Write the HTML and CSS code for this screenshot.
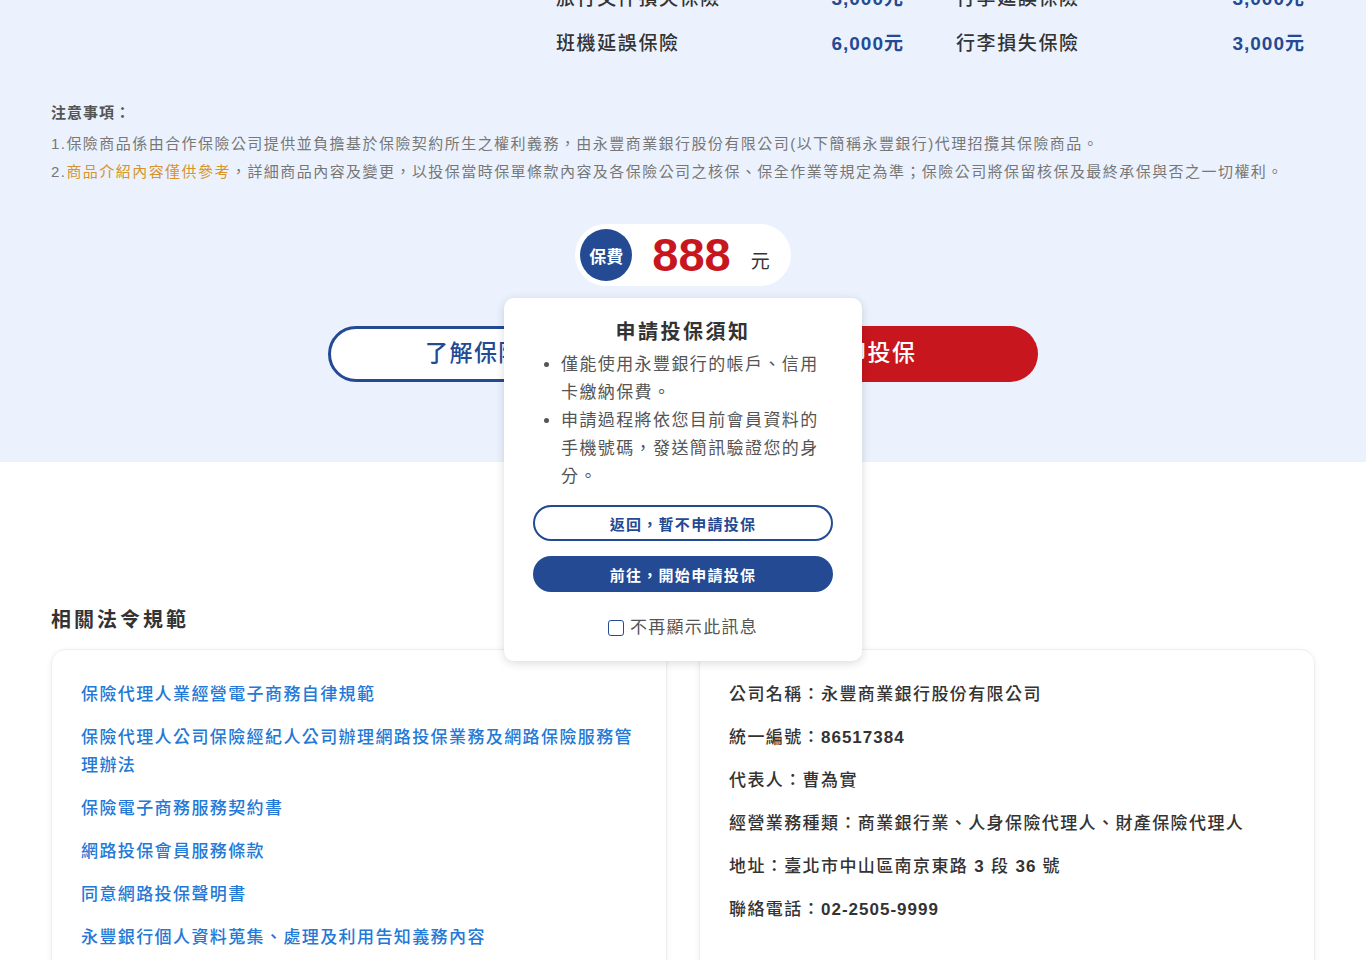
FILE: index.html
```html
<!DOCTYPE html>
<html lang="zh-TW">
<head>
  <meta charset="UTF-8">
  <title>旅平險投保</title>
  <link rel="stylesheet" href="styles.css">
</head>
<body>

  <section class="plan">
    <div class="coverage">
      <div class="cov-item"><span class="cov-name">旅行文件損失保險</span><span class="cov-amt">3,000元</span></div>
      <div class="cov-item"><span class="cov-name">行李延誤保險</span><span class="cov-amt">3,000元</span></div>
      <div class="cov-item"><span class="cov-name">班機延誤保險</span><span class="cov-amt">6,000元</span></div>
      <div class="cov-item"><span class="cov-name">行李損失保險</span><span class="cov-amt">3,000元</span></div>
    </div>

    <div class="notes">
      <h4>注意事項：</h4>
      <p>1.保險商品係由合作保險公司提供並負擔基於保險契約所生之權利義務，由永豐商業銀行股份有限公司(以下簡稱永豐銀行)代理招攬其保險商品。</p>
      <p>2.<span class="hl">商品介紹內容僅供參考</span>，詳細商品內容及變更，以投保當時保單條款內容及各保險公司之核保、保全作業等規定為準；保險公司將保留核保及最終承保與否之一切權利。</p>
    </div>

    <div class="premium">
      <span class="premium-tag">保費</span>
      <span class="premium-num">888</span>
      <span class="premium-unit">元</span>
    </div>

    <div class="actions">
      <button class="btn-outline">了解保障內容</button>
      <button class="btn-red">立即投保</button>
    </div>
  </section>

  <section class="legal">
    <h3>相關法令規範</h3>
    <div class="legal-grid">
      <div class="card">
        <a href="#">保險代理人業經營電子商務自律規範</a>
        <a href="#">保險代理人公司保險經紀人公司辦理網路投保業務及網路保險服務管理辦法</a>
        <a href="#">保險電子商務服務契約書</a>
        <a href="#">網路投保會員服務條款</a>
        <a href="#">同意網路投保聲明書</a>
        <a href="#">永豐銀行個人資料蒐集、處理及利用告知義務內容</a>
      </div>
      <div class="card info">
        <p>公司名稱：永豐商業銀行股份有限公司</p>
        <p>統一編號：<span class="num">86517384</span></p>
        <p>代表人：曹為實</p>
        <p>經營業務種類：商業銀行業、人身保險代理人、財產保險代理人</p>
        <p>地址：臺北市中山區南京東路 <span class="num">3</span> 段 <span class="num">36</span> 號</p>
        <p>聯絡電話：<span class="num">02-2505-9999</span></p>
      </div>
    </div>
  </section>

  <div class="notice">
    <h3>申請投保須知</h3>
    <ul>
      <li>僅能使用永豐銀行的帳戶、信用卡繳納保費。</li>
      <li>申請過程將依您目前會員資料的手機號碼，發送簡訊驗證您的身分。</li>
    </ul>
    <button class="nbtn nbtn-back">返回，暫不申請投保</button>
    <button class="nbtn nbtn-go">前往，開始申請投保</button>
    <label class="nocheck"><input type="checkbox">不再顯示此訊息</label>
  </div>

</body>
</html>
```

FILE: styles.css
```css
body {
  margin: 0;
  font-family: "Liberation Sans", "Noto Sans CJK TC", sans-serif;
  color: #333;
  background: #fff;
  position: relative;
}

.plan {
  background: #ebf2fd;
  padding: 0 51px 80px;
}

.coverage {
  display: grid;
  grid-template-columns: 348px 349px;
  column-gap: 52px;
  justify-content: end;
  padding-right: 10px;
  margin-top: -24px;
}

.cov-item {
  display: flex;
  justify-content: space-between;
  height: 45px;
  line-height: 45px;
  font-size: 19px;
  letter-spacing: 1.6px;
}

.cov-name {
  color: #333;
  font-weight: 500;
}

.cov-amt {
  color: #234a93;
  font-weight: bold;
  letter-spacing: 1px;
}

.notes {
  margin-top: 33px;
}

.notes h4 {
  margin: 0 0 3px;
  font-size: 15px;
  line-height: 28px;
  color: #555;
  letter-spacing: 1px;
}

.notes p {
  margin: 0;
  font-size: 15px;
  line-height: 28px;
  color: #777;
  letter-spacing: 1.45px;
}

.hl {
  color: #d8932a;
}

.premium {
  display: flex;
  align-items: center;
  width: max-content;
  margin: 38px auto 0;
  padding: 5px 21px 5px 5px;
  background: #fff;
  border-radius: 31px;
}

.premium-tag {
  width: 52px;
  height: 52px;
  border-radius: 50%;
  background: #234a93;
  color: #fff;
  font-size: 17px;
  font-weight: bold;
  display: flex;
  align-items: center;
  justify-content: center;
}

.premium-num {
  margin-left: 20px;
  font-size: 47px;
  font-weight: bold;
  color: #c8161e;
  line-height: 52px;
}

.premium-unit {
  margin-left: 20px;
  font-size: 19px;
  color: #333;
  margin-top: 8px;
}

.actions {
  display: flex;
  justify-content: center;
  gap: 28px;
  margin-top: 40px;
}

.actions button {
  width: 341px;
  height: 56px;
  border-radius: 28px;
  font-family: inherit;
  font-size: 23px;
  font-weight: 500;
  letter-spacing: 1.5px;
  line-height: 1;
  padding-bottom: 2px;
  cursor: pointer;
}

.btn-outline {
  background: #fff;
  border: 3px solid #234a93;
  color: #234a93;
}

.btn-red {
  background: #c8161e;
  border: none;
  color: #fff;
}

.legal {
  padding: 144px 51px 40px;
}

.legal h3 {
  margin: 0;
  font-size: 20px;
  line-height: 28px;
  letter-spacing: 3px;
  color: #333;
}

.legal-grid {
  display: grid;
  grid-template-columns: 1fr 1fr;
  gap: 32px;
  margin-top: 15px;
}

.card {
  border: 1px solid #eee;
  border-radius: 14px;
  box-shadow: 0 2px 6px rgba(0,0,0,0.06);
  padding: 31px 29px 30px;
  display: flex;
  flex-direction: column;
  gap: 15px;
  min-height: 300px;
}

.card a {
  color: #2479d6;
  text-decoration: none;
  font-size: 17px;
  line-height: 28px;
  letter-spacing: 1.4px;
  font-weight: 500;
}

.info p {
  margin: 0;
  font-size: 17px;
  line-height: 28px;
  letter-spacing: 1.4px;
  font-weight: 500;
  color: #333;
}

.info .num {
  font-weight: bold;
  letter-spacing: 1px;
}

.notice {
  position: absolute;
  top: 298px;
  left: 50%;
  margin-left: -179px;
  width: 358px;
  box-sizing: border-box;
  padding: 20px 29px 19px;
  background: #fff;
  border-radius: 10px;
  box-shadow: 0 2px 10px rgba(0,0,0,0.15);
}

.notice h3 {
  margin: 0;
  text-align: center;
  font-size: 20px;
  line-height: 28px;
  letter-spacing: 2.5px;
  color: #333;
}

.notice ul {
  margin: 5px 0 0;
  padding-left: 28px;
}

.notice li {
  font-size: 17px;
  line-height: 28px;
  letter-spacing: 1.4px;
  color: #555;
}

.nbtn {
  display: block;
  width: 100%;
  height: 36px;
  border-radius: 18px;
  font-family: inherit;
  font-size: 15px;
  font-weight: bold;
  letter-spacing: 1.3px;
  cursor: pointer;
}

.nbtn-back {
  margin-top: 14px;
  background: #fff;
  border: 2px solid #234a93;
  color: #234a93;
}

.nbtn-go {
  margin-top: 15px;
  background: #234a93;
  border: none;
  color: #fff;
}

.nocheck {
  display: flex;
  justify-content: center;
  align-items: center;
  gap: 6px;
  margin-top: 22px;
  font-size: 17px;
  line-height: 28px;
  letter-spacing: 1.3px;
  color: #555;
}

.nocheck input {
  appearance: none;
  width: 16px;
  height: 16px;
  margin: 0;
  border: 1.5px solid #234a93;
  border-radius: 3px;
  background: #fff;
}
```
